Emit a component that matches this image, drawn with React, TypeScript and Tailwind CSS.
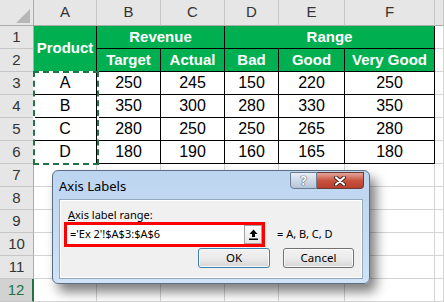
import React from 'react';

const COLS = ['A', 'B', 'C', 'D', 'E', 'F', ''];

const DATA: [string, number, number, number, number, number][] = [
  ['A', 250, 245, 150, 220, 250],
  ['B', 350, 300, 280, 330, 350],
  ['C', 280, 250, 250, 265, 280],
  ['D', 180, 190, 160, 165, 180],
];

const colHead =
  'bg-[#e6e6e6] border-r border-b border-r-[#c6c6c6] border-b-[#ababab] text-[15px] text-[#333] flex items-center justify-center';
const rowHead =
  'bg-[#e6e6e6] border-r border-b border-r-[#ababab] border-b-[#c6c6c6] text-[15px] text-[#333] flex items-center justify-center';
const blank = 'border-r border-b border-[#d4d4d4]';
const green =
  'bg-[#00b050] border-r border-b border-black text-white font-bold text-[15px] flex items-center justify-center';
const cell = 'bg-white border-r border-b border-black text-[16px] text-black flex items-center justify-center';

const RowNum = ({ n, active }: { n: number; active?: boolean }) =>
  active ? (
    <div className="bg-[#d2d2d2] border-r-2 border-b border-r-[#217346] border-b-[#c6c6c6] text-[15px] text-[#217346] flex items-center justify-center">
      {n}
    </div>
  ) : (
    <div className={rowHead}>{n}</div>
  );

const Sheet = () => (
  <div className="grid grid-cols-[34px_63px_64px_64px_54px_66px_90px_9px] grid-rows-[26px_repeat(12,23px)]">
    {/* column headers */}
    <div className="relative bg-[#e6e6e6] border-r border-b border-[#ababab]">
      <svg className="absolute left-0 top-0" width="33" height="25">
        <polygon points="30,9 30,23 16,23" fill="#b7b7b7" />
      </svg>
    </div>
    {COLS.map((c, i) => (
      <div key={i} className={colHead}>
        {c}
      </div>
    ))}

    {/* rows 1-2: table header */}
    <RowNum n={1} />
    <div className={`${green} row-span-2`}>Product</div>
    <div className={`${green} col-span-2`}>Revenue</div>
    <div className={`${green} col-span-3`}>Range</div>
    <div className={blank} />

    <RowNum n={2} />
    <div className={green}>Target</div>
    <div className={green}>Actual</div>
    <div className={green}>Bad</div>
    <div className={green}>Good</div>
    <div className={green}>Very Good</div>
    <div className={blank} />

    {/* rows 3-6: data */}
    {DATA.map((r, i) => (
      <React.Fragment key={r[0]}>
        <RowNum n={i + 3} />
        {r.map((v, j) => (
          <div key={j} className={cell}>
            {v}
          </div>
        ))}
        <div className={blank} />
      </React.Fragment>
    ))}

    {/* rows 7-12: empty */}
    {[7, 8, 9, 10, 11, 12].map((n) => (
      <React.Fragment key={n}>
        <RowNum n={n} active={n === 12} />
        {[0, 1, 2, 3, 4, 5, 6].map((j) => (
          <div key={j} className={blank} />
        ))}
      </React.Fragment>
    ))}
  </div>
);

const btn =
  'h-[20px] rounded-[3px] border text-[11.5px] text-black flex items-center justify-center bg-linear-to-b from-[#f2f2f2] via-[#ebebeb] to-[#d6d6d6] shadow-[inset_0_0_0_1px_rgba(255,255,255,0.8)]';

const AxisDialog = () => (
  <div className="absolute left-[52px] top-[170px] w-[318px] h-[114px] rounded-[6px] border border-[#5d6e82] bg-linear-to-b from-[#bcd5f0] to-[#d0e3f7] shadow-[6px_8px_12px_rgba(0,0,0,0.5)] flex flex-col px-[6px] pb-[4px] font-['Noto_Sans','Segoe_UI',sans-serif]">
    {/* title bar */}
    <div className="relative h-[28px] flex items-center pt-[3px]">
      <span className="text-[13px] text-black">Axis Labels</span>
      <div className="absolute top-[1px] right-[-1px] flex">
        <div className="w-[27px] h-[17px] rounded-bl-[4px] border border-[#6d7d91] bg-linear-to-b from-[#e8eef6] via-[#cdd9e7] to-[#b3c4d8] flex items-center justify-center text-[13px] font-bold text-white leading-none [text-shadow:0_0_1px_#333,0_0_1px_#333]">
          ?
        </div>
        <div className="w-[47px] h-[17px] rounded-br-[4px] border border-l-0 border-[#6b3a34] bg-linear-to-b from-[#e3a59b] via-[#c9533f] to-[#b8402e] flex items-center justify-center">
          <svg width="14" height="10" viewBox="0 0 14 10">
            <path d="M3 1.5 L11 8.5 M11 1.5 L3 8.5" stroke="#3b2320" strokeWidth="4" strokeLinecap="round" />
            <path d="M3 1.5 L11 8.5 M11 1.5 L3 8.5" stroke="#fff" strokeWidth="2.2" strokeLinecap="round" />
          </svg>
        </div>
      </div>
    </div>

    {/* content panel */}
    <div className="flex-1 border border-[#94a8bf] bg-[#f0f0f0] shadow-[inset_0_0_0_1px_#ffffff] flex flex-col pl-[4px]">
      <div className="mt-[7px] ml-[4px] h-[15px] leading-[15px] text-[11px] text-black">
        <span className="underline">A</span>xis label range:
      </div>
      <div className="flex items-center">
        <div className="w-[201px] h-[25px] border-[3px] border-[#ff0000] bg-white flex items-stretch">
          <div className="flex-1 pl-[3px] text-[11px] text-black flex items-center">='Ex 2'!$A$3:$A$6</div>
          <div className="w-[18px] border border-[#a3a3a3] bg-linear-to-b from-[#fdfdfd] to-[#e6e6e6] flex items-center justify-center">
            <svg width="9" height="11" viewBox="0 0 9 11">
              <path d="M4.5 0.5 L8.5 5 L6 5 L6 8 L3 8 L3 5 L0.5 5 Z" fill="#000" />
              <rect x="0" y="9.5" width="9" height="1.5" fill="#000" />
            </svg>
          </div>
        </div>
        <span className="ml-[12px] text-[11px] text-black">= A, B, C, D</span>
      </div>
      <div className="mt-[1px] flex justify-end pr-[8px] gap-[13px]">
        <div className={`${btn} w-[72px] border-[#3c7fb1] shadow-[inset_0_0_0_1px_#a9dcf6]`}>OK</div>
        <div className={`${btn} w-[71px] border-[#707070]`}>Cancel</div>
      </div>
    </div>
  </div>
);

export default function App() {
  return (
    <div className="relative w-[444px] h-[302px] overflow-hidden bg-white font-['Liberation_Sans',Arial,sans-serif]">
      <Sheet />
      {/* copy marquee around A3:A6 */}
      <div className="absolute left-[33px] top-[71px] w-[66px] h-[94px] border-2 border-white" />
      <div className="absolute left-[33px] top-[71px] w-[66px] h-[94px] border-2 border-dashed border-[#217346]" />
      <AxisDialog />
    </div>
  );
}
